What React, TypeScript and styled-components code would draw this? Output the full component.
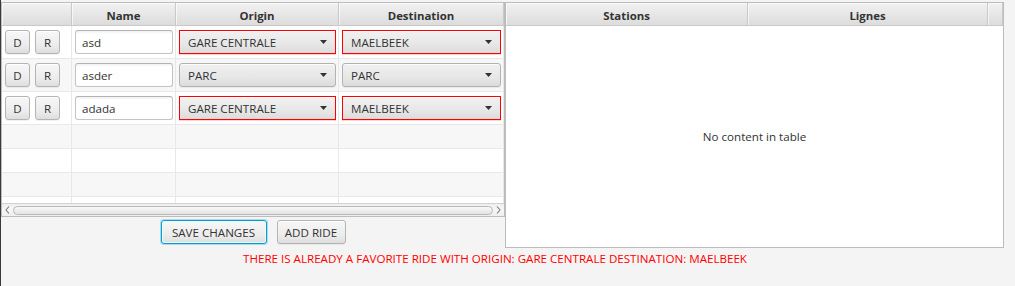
import React from "react";
import styled, { createGlobalStyle, css } from "styled-components";

const FONT = `"Open Sans", "Noto Sans", "Liberation Sans", sans-serif`;
const SIZE = "11.6px";

const GlobalStyle = createGlobalStyle`
  html, body { margin: 0; padding: 0; background: #f4f4f4; }
  body { font-family: ${FONT}; font-size: ${SIZE}; color: #333333; }
  * { box-sizing: border-box; }
`;

const Root = styled.div`
  width: 1015px;
  height: 286px;
  border-left: 1px solid #3a3a3a;
  padding-top: 2px;
  display: flex;
  flex-direction: column;
  background: #f4f4f4;
  overflow: hidden;
`;

const TopArea = styled.div`
  display: flex;
  align-items: flex-start;
`;

const LeftPane = styled.div`
  width: 504px;
  display: flex;
  flex-direction: column;
`;

const TableBox = styled.div<{ $h: number; $w?: number }>`
  height: ${(p) => p.$h}px;
  width: ${(p) => (p.$w ? `${p.$w}px` : "100%")};
  border: 1px solid #bcbcbc;
  background: #ffffff;
  display: flex;
  flex-direction: column;
  overflow: hidden;
`;

const HeaderRow = styled.div`
  display: flex;
  height: 23px;
  flex: none;
`;

const HeaderCell = styled.div<{ $w: number }>`
  width: ${(p) => p.$w}px;
  flex: none;
  height: 100%;
  display: flex;
  align-items: center;
  justify-content: center;
  padding-top: 2px;
  font-weight: bold;
  font-size: 11.4px;
  color: #333333;
  border-right: 1px solid #c9c9c9;
  border-bottom: 1px solid #c9c9c9;
  background: linear-gradient(to bottom, #f1f1f1 0%, #e6e6e6 55%, #dcdcdc 100%);
  box-shadow: inset 1px 1px 0 rgba(255, 255, 255, 0.65);
`;

const Row = styled.div<{ $h: number; $alt: boolean }>`
  display: flex;
  height: ${(p) => p.$h}px;
  flex: none;
  border-bottom: 1px solid #e8e8e8;
  background: ${(p) => (p.$alt ? "#f7f7f7" : "#ffffff")};
`;

const FillRow = styled.div`
  flex: 1;
  display: flex;
  background: #ffffff;
`;

const Cell = styled.div<{ $w: number }>`
  width: ${(p) => p.$w}px;
  flex: none;
  display: flex;
  align-items: center;
  gap: 5px;
  padding: 0 2px 0 3px;
  border-right: 1px solid #e8e8e8;
`;

const SmallButton = styled.button<{ $w: number; $focused?: boolean }>`
  width: ${(p) => p.$w}px;
  height: 24px;
  flex: none;
  padding: 0;
  margin: 0;
  font-family: ${FONT};
  font-size: ${SIZE};
  color: #333333;
  border: 1px solid #b4b4b4;
  border-radius: 3px;
  background: linear-gradient(to bottom, #f7f7f7 0%, #ececec 65%, #dedede 100%);
  box-shadow: inset 0 1px 0 rgba(255, 255, 255, 0.9), 0 1px 0 rgba(0, 0, 0, 0.05);
  ${(p) =>
    p.$focused &&
    css`
      border-color: #039ed3;
      box-shadow: 0 0 0 1px rgba(3, 158, 211, 0.3), inset 0 0 0 1px #f2f9fc;
    `}
`;

const TextInput = styled.input`
  width: 100%;
  height: 24px;
  margin: 0;
  padding: 0 6px;
  font-family: ${FONT};
  font-size: ${SIZE};
  color: #333333;
  border: 1px solid #c4c4c4;
  border-top-color: #b3b3b3;
  border-radius: 3px;
  background: linear-gradient(to bottom, #f0f0f0 0px, #ffffff 3px);
  outline: none;
`;

const Combo = styled.div<{ $error: boolean }>`
  width: 100%;
  height: 24px;
  display: flex;
  align-items: center;
  padding: 0 8px 0 8px;
  border: 1px solid ${(p) => (p.$error ? "#ff0000" : "#b2b2b2")};
  border-radius: ${(p) => (p.$error ? "0" : "3px")};
  background: linear-gradient(to bottom, #f1f1f1 0%, #e7e7e7 60%, #dcdcdc 100%);
  box-shadow: inset 0 1px 0 rgba(255, 255, 255, 0.8)
    ${(p) => (p.$error ? ", 0 1px 0 rgba(255, 0, 0, 0.18)" : ", 0 1px 0 rgba(0, 0, 0, 0.05)")};
`;

const ComboValue = styled.span`
  flex: 1;
  white-space: nowrap;
  overflow: hidden;
  color: #333333;
`;

const ScrollBar = styled.div`
  height: 13px;
  flex: none;
  display: flex;
  align-items: stretch;
  border-top: 1px solid #d2d2d2;
  background: linear-gradient(to bottom, #efefef, #f6f6f6 50%, #efefef);
`;

const ScrollArrow = styled.div<{ $w: number }>`
  width: ${(p) => p.$w}px;
  flex: none;
  display: flex;
  align-items: center;
  justify-content: center;
`;

const ScrollTrack = styled.div`
  flex: 1;
  display: flex;
  align-items: flex-start;
  padding-top: 2px;
`;

const ScrollThumb = styled.div`
  flex: 1;
  height: 9px;
  border: 1px solid #b9b9b9;
  border-radius: 5px;
  background: linear-gradient(to bottom, #f8f8f8, #e4e4e4);
`;

const ButtonBar = styled.div`
  display: flex;
  justify-content: center;
  gap: 10px;
  margin-top: 3px;
`;

const Placeholder = styled.div`
  flex: 1;
  display: flex;
  align-items: center;
  justify-content: center;
  padding-bottom: 1px;
  color: #333333;
`;

const Message = styled.div`
  margin-top: 3px;
  height: 16px;
  line-height: 16px;
  padding-right: 26px;
  text-align: center;
  color: #ff0000;
  white-space: nowrap;
`;

const ArrowDown = () => (
  <svg width="7" height="4" viewBox="0 0 7 4">
    <polygon points="0,0 7,0 3.5,4" fill="#333333" />
  </svg>
);

const Chevron = ({ dir }: { dir: "left" | "right" }) => (
  <svg width="5" height="8" viewBox="0 0 5 8">
    <polyline
      points={dir === "left" ? "4,0.5 1,4 4,7.5" : "1,0.5 4,4 1,7.5"}
      fill="none"
      stroke="#7a7a7a"
      strokeWidth="1.1"
    />
  </svg>
);

const rides = [
  { name: "asd", origin: "GARE CENTRALE", dest: "MAELBEEK", error: true },
  { name: "asder", origin: "PARC", dest: "PARC", error: false },
  { name: "adada", origin: "GARE CENTRALE", dest: "MAELBEEK", error: true },
];

const leftCols = [70, 104, 163, 165];
const rightCols = [242, 240, 15];

export default function App() {
  return (
    <>
      <GlobalStyle />
      <Root>
        <TopArea>
          <LeftPane>
            <TableBox $h={215}>
              <HeaderRow>
                <HeaderCell $w={leftCols[0]} />
                <HeaderCell $w={leftCols[1]}>Name</HeaderCell>
                <HeaderCell $w={leftCols[2]}>Origin</HeaderCell>
                <HeaderCell $w={leftCols[3]}>Destination</HeaderCell>
              </HeaderRow>
              {rides.map((r, i) => (
                <Row key={i} $h={33} $alt={i % 2 === 1}>
                  <Cell $w={leftCols[0]}>
                    <SmallButton $w={25}>D</SmallButton>
                    <SmallButton $w={25}>R</SmallButton>
                  </Cell>
                  <Cell $w={leftCols[1]}>
                    <TextInput defaultValue={r.name} />
                  </Cell>
                  <Cell $w={leftCols[2]}>
                    <Combo $error={r.error}>
                      <ComboValue>{r.origin}</ComboValue>
                      <ArrowDown />
                    </Combo>
                  </Cell>
                  <Cell $w={leftCols[3]}>
                    <Combo $error={r.error}>
                      <ComboValue>{r.dest}</ComboValue>
                      <ArrowDown />
                    </Combo>
                  </Cell>
                </Row>
              ))}
              {[3, 4, 5].map((i) => (
                <Row key={i} $h={24} $alt={i % 2 === 1}>
                  {leftCols.map((w, c) => (
                    <Cell key={c} $w={w} />
                  ))}
                </Row>
              ))}
              <FillRow>
                {leftCols.map((w, c) => (
                  <Cell key={c} $w={w} />
                ))}
              </FillRow>
              <ScrollBar>
                <ScrollArrow $w={11}>
                  <Chevron dir="left" />
                </ScrollArrow>
                <ScrollTrack>
                  <ScrollThumb />
                </ScrollTrack>
                <ScrollArrow $w={11}>
                  <Chevron dir="right" />
                </ScrollArrow>
              </ScrollBar>
            </TableBox>
            <ButtonBar>
              <SmallButton $w={106} $focused>
                SAVE CHANGES
              </SmallButton>
              <SmallButton $w={69}>ADD RIDE</SmallButton>
            </ButtonBar>
          </LeftPane>
          <TableBox $h={246} $w={499}>
            <HeaderRow>
              <HeaderCell $w={rightCols[0]}>Stations</HeaderCell>
              <HeaderCell $w={rightCols[1]}>Lignes</HeaderCell>
              <HeaderCell $w={rightCols[2]} />
            </HeaderRow>
            <Placeholder>No content in table</Placeholder>
          </TableBox>
        </TopArea>
        <Message>THERE IS ALREADY A FAVORITE RIDE WITH ORIGIN: GARE CENTRALE DESTINATION: MAELBEEK</Message>
      </Root>
    </>
  );
}
